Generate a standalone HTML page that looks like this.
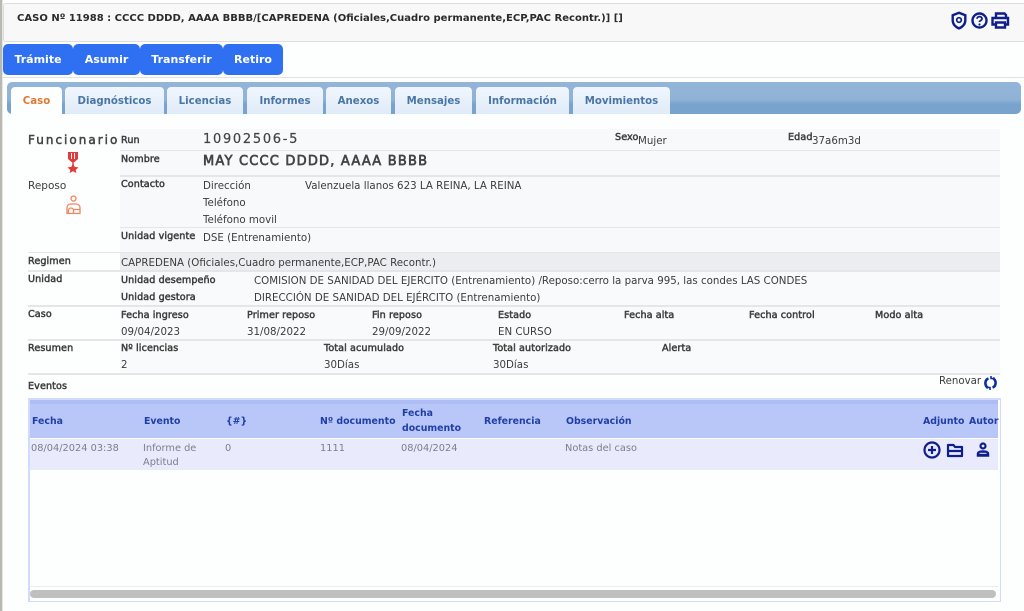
<!DOCTYPE html>
<html><head><meta charset="utf-8"><style>
html,body{margin:0;padding:0;background:#fdfefe;}
#r{position:relative;width:1024px;height:611px;overflow:hidden;font-family:"DejaVu Sans","Liberation Sans",sans-serif;font-size:10.25px;color:#3c3c3c;background:#fdfefe;filter:blur(.3px);}
#r div{position:absolute;white-space:nowrap;}
.t{line-height:14px;}
.b{font-size:9.6px;color:#3f3f3f;-webkit-text-stroke:.5px #3f3f3f;letter-spacing:.1px;}
.btn{top:44px;height:31px;background:#2f70f3;border-radius:5px;color:#fff;font-weight:bold;font-size:11px;line-height:31px;text-align:center;}
.tab{top:87px;height:27px;background:linear-gradient(#f0f6fc,#dfebf8);border-radius:4px 4px 0 0;color:#4a76a6;font-weight:bold;font-size:10.2px;line-height:29px;text-align:center;}
.ln{height:1px;background:#e4e6e8;}
.th{color:#1f3fa5;font-weight:bold;font-size:9.4px;line-height:15px;}
.td{color:#7d7d8c;font-size:9.8px;line-height:14px;}
</style></head><body><div id="r">
<div style="left:0;top:0;width:2px;height:611px;background:#b9b9b4"></div>
<div style="left:2px;top:0;width:1px;height:611px;background:#e6e6e6"></div>
<div style="left:3px;top:3px;width:1021px;height:37px;background:#f8f8f8;border-top:1px solid #ddd;border-bottom:1px solid #ddd;border-left:1px solid #ddd;border-radius:3px 0 0 3px"></div>
<div class="t" style="left:17px;top:12px;font-weight:bold;font-size:10.02px;color:#2b2b2b">CASO Nº 11988 : CCCC DDDD, AAAA BBBB/[CAPREDENA (Oficiales,Cuadro permanente,ECP,PAC Recontr.)] []</div>
<svg style="position:absolute;left:950px;top:11px" width="62" height="19" viewBox="0 0 62 19" fill="none" stroke="#0e1f8c" stroke-width="2.400">
<path d="M9 1.800l6.300 2.400v5c0 4-2.800 6.600-6.300 8.200-3.500-1.600-6.300-4.200-6.300-8.200v-5z"/><circle cx="9" cy="9" r="2.300" stroke-width="1.700"/>
<circle cx="29.500" cy="9.500" r="7"/><path d="M27 7.800c.2-2.900 5-2.900 5 0 0 1.800-2.500 1.600-2.500 3.200" stroke-width="1.800"/><circle cx="29.500" cy="13.500" r="1.100" fill="#0e1f8c" stroke="none"/>
<path d="M46 6V2.500h8.500L56 4v2M46 13.500h-3.500V7h15.500v6.500h-3.500M46 11.500h9v5h-9z"/></svg>

<div class="btn" style="left:3px;width:70px">Trámite</div>
<div class="btn" style="left:73px;width:67px">Asumir</div>
<div class="btn" style="left:140px;width:83px">Transferir</div>
<div class="btn" style="left:223px;width:60px">Retiro</div>

<div style="left:3px;top:77px;width:1021px;height:1px;background:#e2e2e2"></div>
<div style="left:7px;top:82px;width:1014px;height:32px;background:linear-gradient(#93b5d8 0%,#8fb2d6 55%,#77a3cd 70%,#77a3cd 100%);border-radius:5px"></div>
<div class="tab" style="left:11px;width:51px;background:#fdfefe;color:#dd7a34;height:29px">Caso</div>
<div class="tab" style="left:65px;width:99px">Diagnósticos</div>
<div class="tab" style="left:167px;width:76px">Licencias</div>
<div class="tab" style="left:247px;width:76px">Informes</div>
<div class="tab" style="left:326px;width:65px">Anexos</div>
<div class="tab" style="left:395px;width:77px">Mensajes</div>
<div class="tab" style="left:476px;width:93px">Información</div>
<div class="tab" style="left:573px;width:97px">Movimientos</div>

<div style="left:120px;top:129px;width:880px;height:124px;background:#f8f9fb"></div>
<div style="left:120px;top:253px;width:880px;height:17px;background:#ebedf0"></div>
<div style="left:120px;top:270px;width:880px;height:103px;background:#f9fafb"></div>
<div class="ln" style="left:120px;top:150px;width:880px"></div>
<div class="ln" style="left:120px;top:175px;width:880px;height:2px"></div>
<div class="ln" style="left:120px;top:227px;width:880px"></div>
<div class="ln" style="left:28px;top:252px;width:972px"></div>
<div class="ln" style="left:28px;top:270px;width:972px;height:2px"></div>
<div class="ln" style="left:28px;top:305px;width:972px;height:2px"></div>
<div class="ln" style="left:28px;top:339px;width:972px;height:2px"></div>
<div class="ln" style="left:28px;top:373px;width:972px;height:2px"></div>

<div class="t" style="left:28px;top:133px;font-size:12px;letter-spacing:2px;color:#444;-webkit-text-stroke:.5px #444">Funcionario</div>
<svg style="position:absolute;left:66px;top:151px" width="15" height="22" viewBox="0 0 15 22"><path d="M2 1h10v7l-3.500 3h-3L2 8z" fill="#e23a3a"/><path d="M5.500 2v6M8.500 2v6" stroke="#fff" stroke-width="1"/><path d="M7 11v3" stroke="#e23a3a" stroke-width="1.500"/><path d="M7 12.500l1.700 3.400 3.800.5-2.800 2.600.7 3-3.400-1.700-3.400 1.700.7-3L1.500 16.400l3.800-.5z" fill="#e23a3a"/></svg>
<div class="t" style="left:28px;top:179px;font-size:10.5px">Reposo</div>
<svg style="position:absolute;left:65px;top:195px" width="17" height="20" viewBox="0 0 17 20" fill="none" stroke="#f2855f" stroke-width="1.300"><circle cx="8.500" cy="3.500" r="2.500"/><path d="M2 18.500v-5.500c0-2.500 1.500-4 3.500-4h5.500c2.500 0 4 1.500 4 4v5.500zM8.500 18.500v-3a2.500 2.500 0 0 0-5 0v3M8.500 14.500h6.500"/></svg>

<div class="t b" style="left:121px;top:134px">Run</div>
<div class="t" style="left:203px;top:133px;font-size:13px;letter-spacing:1.7px;color:#444;-webkit-text-stroke:.2px #444">10902506-5</div>
<div class="t b" style="left:615px;top:131px">Sexo</div>
<div class="t" style="left:638px;top:134px">Mujer</div>
<div class="t b" style="left:788px;top:131px">Edad</div>
<div class="t" style="left:812px;top:134px">37a6m3d</div>
<div class="t b" style="left:121px;top:153px">Nombre</div>
<div class="t" style="left:203px;top:155px;font-size:13px;letter-spacing:1.2px;-webkit-text-stroke:.65px #444;color:#444">MAY CCCC DDDD, AAAA BBBB</div>
<div class="t b" style="left:121px;top:178px">Contacto</div>
<div class="t" style="left:203px;top:179px">Dirección</div>
<div class="t" style="left:305px;top:179px">Valenzuela llanos 623 LA REINA, LA REINA</div>
<div class="t" style="left:203px;top:196px">Teléfono</div>
<div class="t" style="left:203px;top:213px">Teléfono movil</div>
<div class="t b" style="left:121px;top:230px">Unidad vigente</div>
<div class="t" style="left:203px;top:231px">DSE (Entrenamiento)</div>

<div class="t b" style="left:28px;top:255px">Regimen</div>
<div class="t" style="left:121px;top:256px">CAPREDENA (Oficiales,Cuadro permanente,ECP,PAC Recontr.)</div>
<div class="t b" style="left:28px;top:273px">Unidad</div>
<div class="t b" style="left:121px;top:274px">Unidad desempeño</div>
<div class="t" style="left:254px;top:274px">COMISION DE SANIDAD DEL EJERCITO (Entrenamiento) /Reposo:cerro la parva 995, las condes LAS CONDES</div>
<div class="t b" style="left:121px;top:291px">Unidad gestora</div>
<div class="t" style="left:254px;top:291px">DIRECCIÓN DE SANIDAD DEL EJÉRCITO (Entrenamiento)</div>

<div class="t b" style="left:28px;top:308px">Caso</div>
<div class="t b" style="left:121px;top:309px">Fecha ingreso</div><div class="t" style="left:121px;top:325px">09/04/2023</div>
<div class="t b" style="left:247px;top:309px">Primer reposo</div><div class="t" style="left:247px;top:325px">31/08/2022</div>
<div class="t b" style="left:372px;top:309px">Fin reposo</div><div class="t" style="left:372px;top:325px">29/09/2022</div>
<div class="t b" style="left:498px;top:309px">Estado</div><div class="t" style="left:498px;top:325px">EN CURSO</div>
<div class="t b" style="left:624px;top:309px">Fecha alta</div>
<div class="t b" style="left:749px;top:309px">Fecha control</div>
<div class="t b" style="left:875px;top:309px">Modo alta</div>

<div class="t b" style="left:28px;top:342px">Resumen</div>
<div class="t b" style="left:121px;top:342px">Nº licencias</div><div class="t" style="left:121px;top:358px">2</div>
<div class="t b" style="left:324px;top:342px">Total acumulado</div><div class="t" style="left:324px;top:358px">30Días</div>
<div class="t b" style="left:493px;top:342px">Total autorizado</div><div class="t" style="left:493px;top:358px">30Días</div>
<div class="t b" style="left:662px;top:342px">Alerta</div>

<div class="t b" style="left:28px;top:380px">Eventos</div>
<div class="t" style="left:939px;top:375px;font-size:10.2px">Renovar</div>
<svg style="position:absolute;left:983px;top:376px" width="15" height="14" viewBox="0 0 15 14" fill="none" stroke="#0e2fa0" stroke-width="2.600"><path d="M5.500 2.500C2 3.500 1 9 5 12M9.500 11.500C13 10.500 14 5 10 2"/><path d="M3 11.500h4v2.500M12 2.500H8V0" stroke-width="1.600"/></svg>

<div style="left:28px;top:398px;width:970px;height:201px;border:solid #d3dbfc;border-width:2px 1px 1px 2px;background:#fdfefe"></div>
<div style="left:30px;top:400px;width:968px;height:38px;background:#b9c6f8"></div>
<div style="left:30px;top:400px;width:968px;height:4px;background:#aebdf6"></div>
<div style="left:30px;top:439px;width:968px;height:31px;background:#e9ebfc"></div>

<div class="th" style="left:32px;top:414px">Fecha</div>
<div class="th" style="left:144px;top:414px">Evento</div>
<div class="th" style="left:226px;top:414px">{#}</div>
<div class="th" style="left:320px;top:414px">Nº documento</div>
<div class="th" style="left:402px;top:406px">Fecha<br>documento</div>
<div class="th" style="left:484px;top:414px">Referencia</div>
<div class="th" style="left:566px;top:414px">Observación</div>
<div class="th" style="left:923px;top:414px">Adjunto</div>
<div class="th" style="left:969px;top:414px">Autor</div>

<div class="td" style="left:31px;top:442px">08/04/2024 03:38</div>
<div class="td" style="left:143px;top:442px">Informe de<br>Aptitud</div>
<div class="td" style="left:225px;top:442px">0</div>
<div class="td" style="left:320px;top:442px">1111</div>
<div class="td" style="left:401px;top:442px">08/04/2024</div>
<div class="td" style="left:565px;top:442px">Notas del caso</div>

<svg style="position:absolute;left:922px;top:440px" width="70" height="20" viewBox="0 0 70 20" fill="none" stroke="#0e1f8c" stroke-width="2.200">
<circle cx="10" cy="10" r="7.500"/><path d="M10 6v8M6 10h8"/>
<path d="M26 16V5h5.500l1.500 2h7v9zM26 11h14" stroke-linejoin="round"/>
<circle cx="61" cy="6" r="2.500"/><path d="M55.500 16v-2c0-2 2-3 5.500-3s5.500 1 5.500 3v2z" fill="#0e1f8c" stroke-width="1.500"/><path d="M57.500 13.300h7" stroke="#e9ebfc" stroke-width="1"/></svg>

<div style="left:30px;top:586px;width:968px;height:1px;background:#ececec"></div>
<div style="left:30px;top:590px;width:966px;height:8px;background:#bfbfbf;border-radius:4px"></div>
</div></body></html>
